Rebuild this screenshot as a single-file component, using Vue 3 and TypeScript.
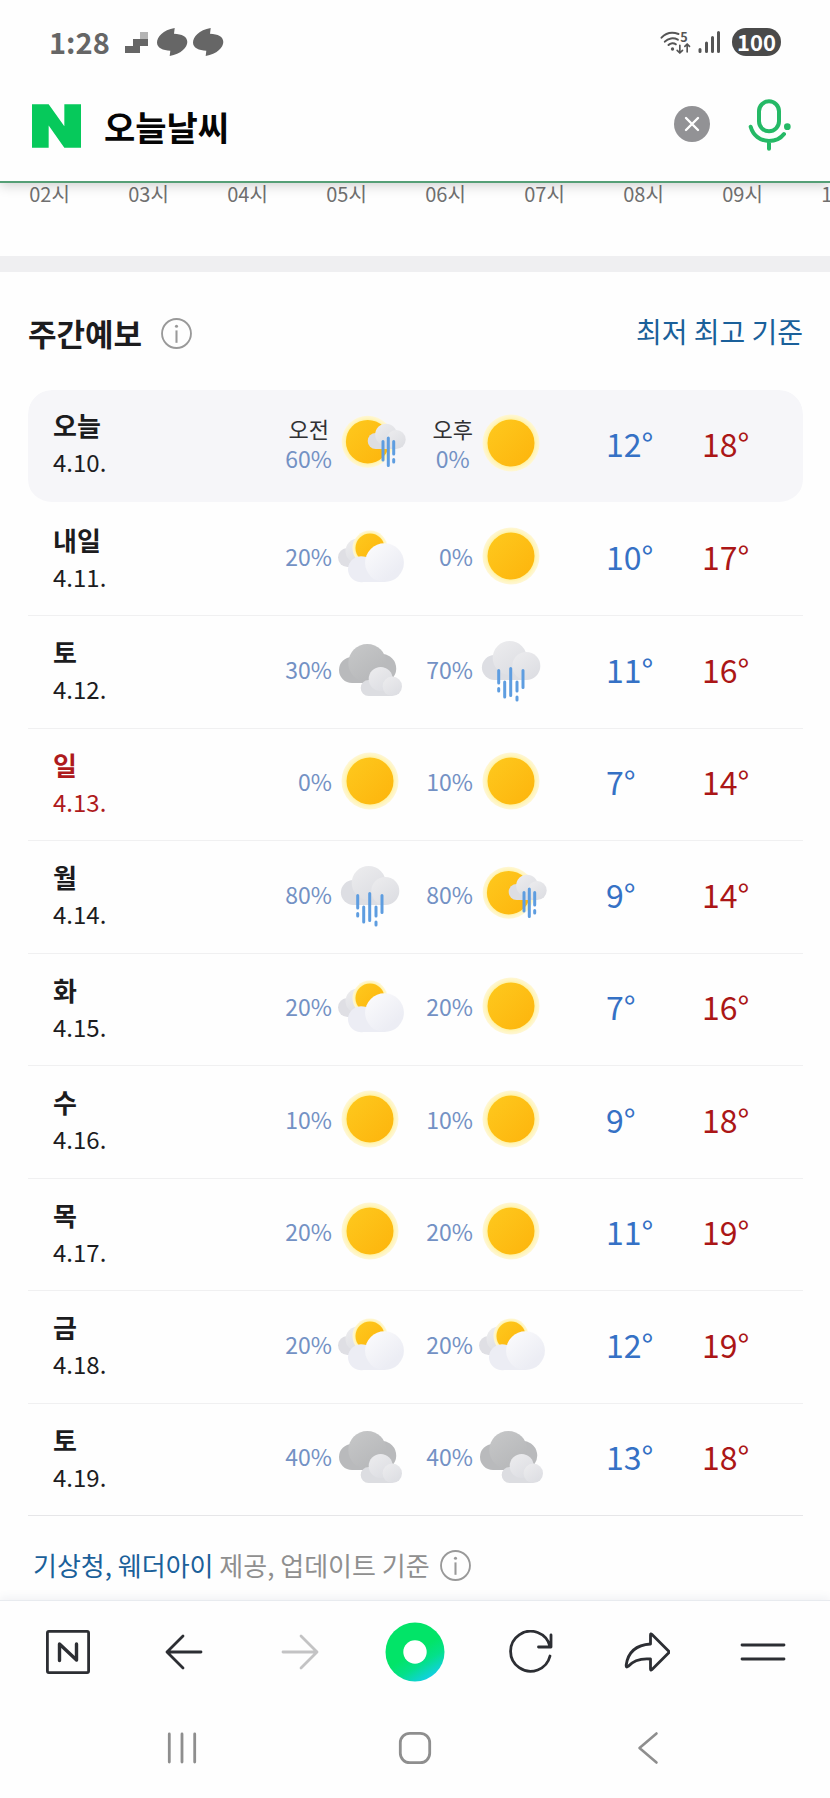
<script setup lang="ts">
import { ref } from 'vue'

type Sky = 'sun' | 'partly' | 'cloudy' | 'rain' | 'sunrain'

interface Half {
  chance: number
  sky: Sky
}

interface Day {
  name: string
  date: string
  halves: [Half, Half]
  low: number
  high: number
  holiday?: boolean
}

const query = ref('오늘날씨')
const hours = ['02시', '03시', '04시', '05시', '06시', '07시', '08시', '09시', '10시']
const halfLabels = ['오전', '오후']

function day(name: string, date: string, am: [number, Sky], pm: [number, Sky], low: number, high: number, holiday = false): Day {
  return {
    name,
    date,
    halves: [
      { chance: am[0], sky: am[1] },
      { chance: pm[0], sky: pm[1] },
    ],
    low,
    high,
    holiday,
  }
}

const days: Day[] = [
  day('오늘', '4.10.', [60, 'sunrain'], [0, 'sun'], 12, 18),
  day('내일', '4.11.', [20, 'partly'], [0, 'sun'], 10, 17),
  day('토', '4.12.', [30, 'cloudy'], [70, 'rain'], 11, 16),
  day('일', '4.13.', [0, 'sun'], [10, 'sun'], 7, 14, true),
  day('월', '4.14.', [80, 'rain'], [80, 'sunrain'], 9, 14),
  day('화', '4.15.', [20, 'partly'], [20, 'sun'], 7, 16),
  day('수', '4.16.', [10, 'sun'], [10, 'sun'], 9, 18),
  day('목', '4.17.', [20, 'sun'], [20, 'sun'], 11, 19),
  day('금', '4.18.', [20, 'partly'], [20, 'partly'], 12, 19),
  day('토', '4.19.', [40, 'cloudy'], [40, 'cloudy'], 13, 18),
]
</script>

<template>
  <div class="page">
    <svg class="defs" width="0" height="0" aria-hidden="true">
      <defs>
        <linearGradient id="g-sun" x1="0" y1="0" x2="1" y2="1">
          <stop offset="0" stop-color="#fec91e" />
          <stop offset="1" stop-color="#fdb40c" />
        </linearGradient>
        <radialGradient id="g-halo">
          <stop offset="0.8" stop-color="#fff19a" />
          <stop offset="0.9" stop-color="#fff5c0" />
          <stop offset="1" stop-color="#fff7d6" />
        </radialGradient>
        <linearGradient id="g-white" x1="0.1" y1="0.1" x2="0.7" y2="0.8">
          <stop offset="0" stop-color="#fafafc" />
          <stop offset="1" stop-color="#ecedf4" />
        </linearGradient>
        <linearGradient id="g-light" x1="0.1" y1="0" x2="0.8" y2="1">
          <stop offset="0" stop-color="#ececee" />
          <stop offset="1" stop-color="#dcdde2" />
        </linearGradient>
        <linearGradient id="g-gray" x1="0.1" y1="0" x2="0.8" y2="1">
          <stop offset="0" stop-color="#c6c7c8" />
          <stop offset="1" stop-color="#b5b6b8" />
        </linearGradient>
        <linearGradient id="g-dot" x1="0.3" y1="0" x2="0.9" y2="1">
          <stop offset="0.45" stop-color="#02e468" />
          <stop offset="0.65" stop-color="#04e08a" />
          <stop offset="0.9" stop-color="#12cfe8" />
        </linearGradient>
      </defs>
    </svg>

    <div class="status">
      <span class="clock">1:28</span>
      <svg class="ic-steps" viewBox="0 0 23 21" width="23" height="21" aria-hidden="true">
        <path d="M15 0h8v7h-8z" fill="#b4b4b4" />
        <path d="M8 7h15v7h-8v7H0v-7h8z" fill="#666" />
      </svg>
      <svg v-for="n in 2" :key="n" class="ic-swirl" viewBox="0 0 31 28" width="31" height="28" aria-hidden="true">
        <path d="M17.700 0C6 2 0 9 0 14.500C0 20 6 22.300 13.300 22.700L12.700 28C24 26 30.300 19.500 30.300 14C30.300 8.500 25 6 17 5.700Z" fill="#666" />
      </svg>
      <span class="spacer"></span>
      <svg class="ic-wifi" viewBox="0 0 92 75" width="31" height="25" aria-hidden="true">
        <g fill="none" stroke="#555" stroke-width="6" stroke-linecap="round" stroke-linejoin="round">
          <path d="M4 23C18 8 38 6 55 12" />
          <path d="M14 35C24 24 40 22 53 29" />
          <path d="M25 45C31 38 41 38 47 43" />
          <path d="M59 46V68M51 61L59 69L67 61M81 66V43M74 49L81 42L88 49" stroke-width="5" />
        </g>
        <circle cx="37" cy="57" r="5" fill="#555" />
        <text x="60" y="35" font-size="38" font-weight="700" fill="#555">5</text>
      </svg>
      <svg class="ic-signal" viewBox="0 0 23 22" width="23" height="22" aria-hidden="true">
        <path d="M2 18.500V20.500M8.500 12V20.500M14.500 6.500V20.500M20.500 1.500V20.500" fill="none" stroke="#555" stroke-width="3" stroke-linecap="round" />
      </svg>
      <span class="battery">100</span>
    </div>

    <form class="search" @submit.prevent>
      <a class="logo" href="#" aria-label="네이버">
        <svg viewBox="0 0 147 131" width="49" height="44" aria-hidden="true">
          <path d="M0 0H50L97 66V0H147V131H97L50 64V131H0Z" fill="#06c95b" />
        </svg>
      </a>
      <input v-model="query" class="query" type="text" aria-label="검색어" />
      <button class="clear" type="button" aria-label="지우기" @click="query = ''">
        <svg viewBox="0 0 36 36" width="36" height="36" aria-hidden="true">
          <circle cx="18" cy="18" r="18" fill="#929295" />
          <path d="M12 12L24 24M24 12L12 24" stroke="#fff" stroke-width="2.400" stroke-linecap="round" />
        </svg>
      </button>
      <button class="mic" type="button" aria-label="음성 검색">
        <svg viewBox="0 0 135 159" width="45" height="53" aria-hidden="true">
          <g fill="none" stroke="#25b966" stroke-width="12" stroke-linecap="round">
            <rect x="36" y="10" width="60" height="90" rx="30" />
            <path d="M11 86C18 112 40 129 66 129C85 129 101 121 111 108M66 129V152" />
          </g>
          <circle cx="121" cy="86" r="10" fill="#25b966" />
        </svg>
      </button>
    </form>

    <ul class="hours">
      <li v-for="hour in hours" :key="hour">{{ hour }}</li>
    </ul>

    <main class="weekly">
      <header class="head">
        <h2>주간예보</h2>
        <button class="info" type="button" aria-label="주간예보 안내">
          <svg viewBox="0 0 30 30" width="31" height="31" aria-hidden="true">
            <circle cx="15" cy="15" r="14" fill="none" stroke="#999" stroke-width="1.800" />
            <circle cx="15" cy="8" r="1.500" fill="#999" />
            <path d="M15 12V24" stroke="#999" stroke-width="2" />
          </svg>
        </button>
        <a class="basis" href="#">최저 최고 기준</a>
      </header>

      <table class="forecast">
        <colgroup>
          <col />
          <col class="c-half" />
          <col class="c-half" />
          <col class="c-low" />
          <col class="c-high" />
        </colgroup>
        <tbody>
          <tr v-for="(d, i) in days" :key="d.date" :class="{ today: i === 0 }">
            <th scope="row" :class="{ holiday: d.holiday }">
              <strong>{{ d.name }}</strong>
              <span>{{ d.date }}</span>
            </th>
            <td v-for="(half, h) in d.halves" :key="h">
              <div class="half">
                <div class="rain">
                  <span v-if="i === 0" class="label">{{ halfLabels[h] }}</span>
                  <span class="chance">{{ half.chance }}%</span>
                </div>
                <svg viewBox="0 0 76 72" width="76" height="72" aria-hidden="true">
                  <template v-if="half.sky === 'sun'">
                    <circle cx="37" cy="36" r="28.500" fill="url(#g-halo)" />
                    <circle cx="37" cy="36" r="23.500" fill="url(#g-sun)" />
                  </template>
                  <template v-else-if="half.sky === 'partly'">
                    <path d="M14.500 28A9.500 9.500 0 1 0 14.500 47H30V28Z" fill="#dfdfe4" />
                    <circle cx="25" cy="31" r="12.500" fill="url(#g-light)" />
                    <circle cx="37" cy="28" r="17.500" fill="url(#g-halo)" />
                    <circle cx="37" cy="28" r="14.500" fill="url(#g-sun)" />
                    <path d="M30.500 36.500A13 13 0 1 0 30.500 62H52V40Z" fill="#ecedf4" />
                    <circle cx="51.500" cy="42.700" r="19.400" fill="url(#g-white)" />
                  </template>
                  <template v-else-if="half.sky === 'cloudy'">
                    <path d="M19 24A13 13 0 1 0 19 50H51A14.500 14.500 0 1 0 46 21Z" fill="#b9babc" />
                    <circle cx="34.300" cy="30" r="19" fill="url(#g-gray)" />
                    <path d="M35.700 47A8 8 0 1 0 35.700 63H59V46Z" fill="#dcdde1" />
                    <circle cx="47.700" cy="46" r="12" fill="url(#g-light)" />
                    <circle cx="59.300" cy="53.300" r="9.700" fill="url(#g-light)" />
                  </template>
                  <template v-else-if="half.sky === 'rain'">
                    <path d="M20.400 22A12.500 12.500 0 1 0 20.400 47H52V22Z" fill="#dddee3" />
                    <circle cx="35.700" cy="25" r="17" fill="url(#g-light)" />
                    <circle cx="52.300" cy="33" r="14" fill="url(#g-light)" />
                    <path d="M24.700 37.500V50M24.700 55.500V58M30.700 49V64M36.700 35.500V62.500M43 49V58M43 64V67M49 37.500V54.500" fill="none" stroke="#5e9de0" stroke-width="3" stroke-linecap="round" />
                  </template>
                  <template v-else>
                    <circle cx="34.700" cy="34.700" r="26" fill="url(#g-halo)" />
                    <circle cx="34.700" cy="34.700" r="21.800" fill="url(#g-sun)" />
                    <path d="M42.700 26A8 8 0 1 0 42.700 42H63V28Z" fill="#dddee3" />
                    <circle cx="53" cy="27.500" r="10.800" fill="url(#g-light)" />
                    <circle cx="63.200" cy="32.500" r="9.500" fill="url(#g-light)" />
                    <path d="M50 34.500V53M55.300 31V58.500M60.700 34.500V47M60.700 52.500V55" fill="none" stroke="#5e9de0" stroke-width="3" stroke-linecap="round" />
                  </template>
                </svg>
              </div>
            </td>
            <td class="temp low">{{ d.low }}°</td>
            <td class="temp high">{{ d.high }}°</td>
          </tr>
        </tbody>
      </table>

      <p class="source">
        <span><a href="#">기상청, 웨더아이</a> 제공, 업데이트 기준</span>
        <button class="info" type="button" aria-label="업데이트 기준 안내">
          <svg viewBox="0 0 30 30" width="31" height="31" aria-hidden="true">
            <circle cx="15" cy="15" r="14" fill="none" stroke="#999" stroke-width="1.800" />
            <circle cx="15" cy="8" r="1.500" fill="#999" />
            <path d="M15 12V24" stroke="#999" stroke-width="2" />
          </svg>
        </button>
      </p>
    </main>

    <nav class="toolbar" aria-label="브라우저 메뉴">
      <button type="button" aria-label="홈">
        <svg viewBox="0 0 44 44" width="44" height="44" aria-hidden="true">
          <g fill="none" stroke="#2c2e33" stroke-width="2.800" stroke-linecap="round" stroke-linejoin="round">
            <rect x="1.400" y="1.400" width="41.200" height="41.200" rx="1.500" />
            <path d="M13.500 30.500V14L30.500 30V14" stroke-width="3.400" />
          </g>
        </svg>
      </button>
      <button type="button" aria-label="뒤로">
        <svg viewBox="0 0 38 36" width="38" height="36" aria-hidden="true">
          <path d="M36 18H2M18 2L2 18L18 34" fill="none" stroke="#2c2e33" stroke-width="2.800" stroke-linecap="round" stroke-linejoin="round" />
        </svg>
      </button>
      <button type="button" aria-label="앞으로" disabled>
        <svg viewBox="0 0 38 36" width="38" height="36" aria-hidden="true">
          <path d="M2 18H36M20 2L36 18L20 34" fill="none" stroke="#c3c3c4" stroke-width="2.800" stroke-linecap="round" stroke-linejoin="round" />
        </svg>
      </button>
      <button type="button" aria-label="그린닷">
        <svg viewBox="0 0 60 60" width="60" height="60" aria-hidden="true">
          <circle cx="30" cy="30" r="29.500" fill="url(#g-dot)" />
          <circle cx="30" cy="30" r="11.700" fill="#fff" />
        </svg>
      </button>
      <button type="button" aria-label="새로고침">
        <svg viewBox="0 0 44 44" width="44" height="44" aria-hidden="true">
          <path d="M41 26A20 20 0 1 1 41 16.500M42 5V17H29.500" fill="none" stroke="#2c2e33" stroke-width="2.800" stroke-linecap="round" stroke-linejoin="round" />
        </svg>
      </button>
      <button type="button" aria-label="공유">
        <svg viewBox="0 0 46 40" width="46" height="40" aria-hidden="true">
          <path d="M26.500 3Q26.500 1 28 2.500L44.500 19Q45.500 20 44.500 21L28 37.500Q26.500 39 26.500 37V27C15 26 8 30 4 34.500Q2 36 2.200 33C4 20 12 13 26.500 12Z" fill="none" stroke="#2c2e33" stroke-width="2.800" stroke-linejoin="round" />
        </svg>
      </button>
      <button type="button" aria-label="메뉴">
        <svg viewBox="0 0 46 20" width="46" height="20" aria-hidden="true">
          <path d="M2 3H44M2 17H44" fill="none" stroke="#2c2e33" stroke-width="2.800" stroke-linecap="round" />
        </svg>
      </button>
    </nav>

    <nav class="system" aria-label="시스템 탐색">
      <button type="button" aria-label="최근 앱">
        <svg viewBox="0 0 30 32" width="30" height="32" aria-hidden="true">
          <path d="M2.300 2V30M15 2V30M27.700 2V30" fill="none" stroke="#8e8e8e" stroke-width="2.800" stroke-linecap="round" />
        </svg>
      </button>
      <button type="button" aria-label="홈 화면">
        <svg viewBox="0 0 34 34" width="34" height="34" aria-hidden="true">
          <rect x="2.300" y="2.300" width="29.400" height="29.400" rx="9.500" fill="none" stroke="#8e8e8e" stroke-width="2.800" />
        </svg>
      </button>
      <button type="button" aria-label="이전">
        <svg viewBox="0 0 22 34" width="22" height="34" aria-hidden="true">
          <path d="M19.500 2.500L2.500 17L19.500 31.500" fill="none" stroke="#8e8e8e" stroke-width="2.600" stroke-linecap="round" stroke-linejoin="round" />
        </svg>
      </button>
    </nav>
  </div>
</template>

<style>
body {
  margin: 0;
  background: #fefefe;
}
</style>

<style scoped>
.page {
  display: flex;
  flex-direction: column;
  min-height: 100vh;
  overflow-x: hidden;
  background: #fefefe;
  color: #1c1c1e;
  font-family: "Noto Sans CJK KR", "Noto Sans", sans-serif;
}
.page * {
  box-sizing: border-box;
}
.defs {
  position: absolute;
}
svg {
  display: block;
  flex: none;
}
button {
  display: flex;
  align-items: center;
  justify-content: center;
  padding: 0;
  border: 0;
  background: none;
  cursor: pointer;
}
a {
  color: #1a609a;
  text-decoration: none;
}

.status {
  display: flex;
  align-items: center;
  height: 84px;
  padding: 0 49px;
  background: #fefefe;
  z-index: 2;
}
.clock {
  width: 76px;
  padding-bottom: 2px;
  color: #666;
  font-size: 29px;
  font-weight: 700;
  line-height: 40px;
}
.ic-swirl {
  margin-left: 5px;
}
.ic-steps {
  margin-right: 4px;
}
.ic-wifi {
  overflow: visible;
}
.spacer {
  flex: 1;
}
.ic-signal {
  margin: 0 11px 0 7px;
}
.battery {
  width: 49px;
  height: 28px;
  border-radius: 14px;
  background: #4a4a4a;
  color: #fff;
  font-size: 22px;
  font-weight: 700;
  line-height: 26px;
  text-align: center;
}

.search {
  display: flex;
  align-items: center;
  height: 99px;
  padding: 0 38px 17px 32px;
  border-bottom: 2px solid #559f76;
  background: #fefefe;
  box-shadow: 0 2px 12px rgba(0, 0, 0, 0.2);
  z-index: 1;
}
.logo,
.query {
  margin-top: 4px;
}
.query {
  flex: 1;
  min-width: 0;
  height: 52px;
  margin-left: 23px;
  padding: 0;
  border: 0;
  outline: none;
  background: transparent;
  color: #050505;
  font-family: inherit;
  font-size: 34px;
  font-weight: 700;
}
.mic {
  margin-left: 37px;
}

.hours {
  display: flex;
  height: 77px;
  margin: -4px 0 0;
  padding: 0;
  list-style: none;
  color: #707070;
  font-size: 20px;
  line-height: 30px;
}
.hours li {
  flex: none;
  width: 99px;
  text-align: center;
}

.weekly {
  padding: 0 27px 0 28px;
  border-top: 16px solid #efeff1;
}
.head {
  display: flex;
  align-items: center;
  height: 118px;
  padding-top: 4px;
}
.head h2 {
  margin: 0 19px 0 0;
  font-size: 31px;
  font-weight: 700;
  line-height: 44px;
}
.basis {
  margin-left: auto;
  margin-bottom: 4px;
  font-size: 28px;
  line-height: 40px;
}

.forecast {
  width: 100%;
  table-layout: fixed;
  border-collapse: separate;
  border-spacing: 0;
}
.c-half {
  width: 141px;
}
.c-low {
  width: 148px;
}
.c-high {
  width: 101px;
}
.forecast tr {
  height: 112px;
}
.forecast tr:nth-child(odd) {
  height: 113px;
}
.forecast tr.today {
  height: 114px;
}
.forecast th,
.forecast td {
  padding: 0 0 7px;
  border-bottom: 1px solid #f0f0f1;
  vertical-align: middle;
}
.forecast .today > * {
  border-bottom: 2px solid transparent;
  background: #f6f6f9;
  background-clip: padding-box;
}
.forecast tr:last-child > * {
  border-bottom-color: #e6e6e8;
}
.forecast .today > :first-child {
  border-radius: 24px 0 0 24px;
}
.forecast .today > :last-child {
  border-radius: 0 24px 24px 0;
}
.forecast th {
  padding-bottom: 4px;
  padding-left: 25px;
  font-weight: 400;
  text-align: left;
}
.forecast .today th {
  padding-bottom: 7px;
}
.forecast th.holiday {
  color: #ae1a1c;
}
.forecast strong,
.forecast th span {
  display: block;
  line-height: 37px;
}
.forecast strong {
  font-size: 26px;
}
.forecast th span {
  font-size: 24px;
}
.half {
  display: flex;
  align-items: center;
  justify-content: flex-end;
  padding-right: 4px;
}
.rain {
  display: flex;
  flex-direction: column;
  align-items: center;
  margin-right: 1px;
}
.label {
  color: #303033;
  font-size: 22px;
  line-height: 30px;
}
.chance {
  color: #7391c4;
  font-size: 23px;
  line-height: 30px;
}
.forecast .temp {
  font-size: 32px;
  line-height: 48px;
}
.forecast .low {
  padding-left: 52px;
  color: #3571c5;
}
.forecast .high {
  color: #ab1616;
}

.source {
  display: flex;
  align-items: center;
  height: 84px;
  margin: 0;
  padding: 14px 0 0 5px;
  gap: 10px;
  color: #8f8f8f;
  font-size: 26px;
  line-height: 38px;
}

.toolbar,
.system {
  display: flex;
  align-items: center;
  justify-content: space-between;
}
.toolbar {
  height: 102px;
  padding: 0 37px 0 38px;
  border-top: 1px solid #e8ebef;
  box-shadow: 0 -3px 8px rgba(70, 90, 130, 0.07);
}
.toolbar button,
.system button {
  width: 60px;
  height: 60px;
}
.system {
  height: 92px;
  padding: 0 152px;
  background: #fefefe;
}
</style>
